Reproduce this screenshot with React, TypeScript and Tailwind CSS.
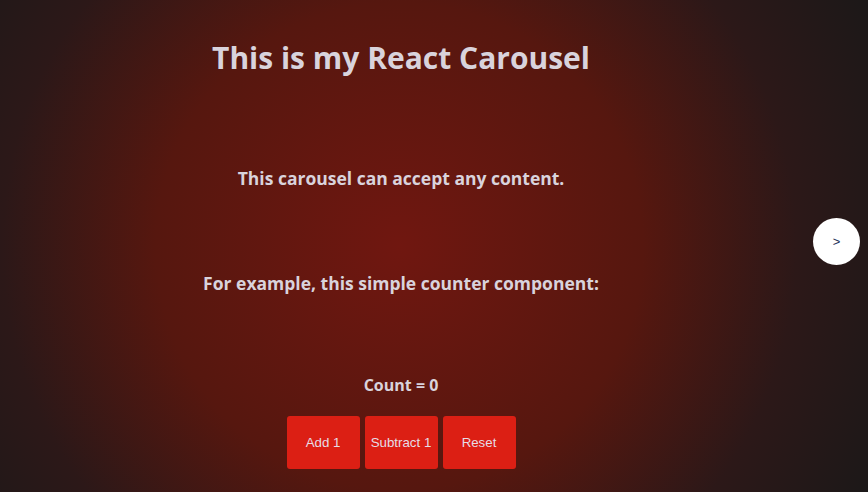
import { useState } from "react";

const Counter = () => {
  const [count, setCount] = useState(0);

  return (
    <div className="flex flex-col items-center">
      <h3 className="text-[16px] font-bold leading-[20px]">Count = {count}</h3>
      <div className="mt-[21px] flex gap-[5px]">
        <button
          onClick={() => setCount(count + 1)}
          className="h-[53px] w-[73px] rounded-[3px] bg-[#dc1f14] font-['Liberation_Sans',Arial,sans-serif] text-[13.3px] text-[#e6dde6]"
        >
          Add 1
        </button>
        <button
          onClick={() => setCount(count - 1)}
          className="h-[53px] w-[73px] rounded-[3px] bg-[#dc1f14] font-['Liberation_Sans',Arial,sans-serif] text-[13.3px] text-[#e6dde6]"
        >
          Subtract 1
        </button>
        <button
          onClick={() => setCount(0)}
          className="h-[53px] w-[73px] rounded-[3px] bg-[#dc1f14] font-['Liberation_Sans',Arial,sans-serif] text-[13.3px] text-[#e6dde6]"
        >
          Reset
        </button>
      </div>
    </div>
  );
}

export default function App() {
  return (
    <div className="flex h-[492px] w-full overflow-hidden bg-[radial-gradient(circle_at_46%_50%,#701710_0%,#56170f_46%,#2c1818_75%,#1c1818_100%)] font-['Open_Sans',sans-serif] text-[#d9d3dc]">
      {/* 슬라이드 */}
      <div className="flex w-[802px] flex-col items-center">
        <h1 className="mt-[38px] text-[30px] font-bold leading-[40px]">This is my React Carousel</h1>
        <p className="mt-[89px] text-[17.5px] font-bold leading-[22px]">This carousel can accept any content.</p>
        <p className="mt-[83px] text-[17.5px] font-bold leading-[22px]">For example, this simple counter component:</p>
        <div className="mt-[81px]">
          <Counter />
        </div>
      </div>

      {/* 다음 버튼 */}
      <div className="flex-1">
        <button className="ml-[11px] mt-[218px] flex h-[47px] w-[47px] items-center justify-center rounded-full bg-white font-['Liberation_Sans',Arial,sans-serif] text-[13px] text-[#1d3159]">
          &gt;
        </button>
      </div>
    </div>
  );
}
